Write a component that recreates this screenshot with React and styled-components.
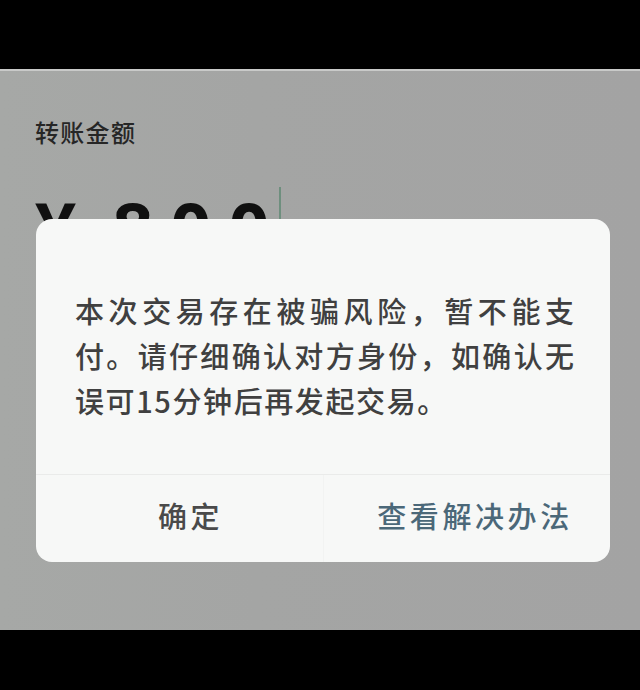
import React from "react";
import styled, { createGlobalStyle } from "styled-components";

const Global = createGlobalStyle`
  html, body { margin: 0; padding: 0; background: #000; }
  body { width: 640px; height: 690px; overflow: hidden; font-family: "Noto Sans CJK SC", "Noto Sans", sans-serif; }
`;

const Frame = styled.div`
  width: 640px;
  height: 690px;
  display: flex;
  flex-direction: column;
  background: #000;
`;

const Letterbox = styled.div`
  height: ${(p) => p.h}px;
  flex: none;
  background: #000;
`;

const Screen = styled.div`
  position: relative;
  height: 561px;
  flex: none;
  box-sizing: border-box;
  background: linear-gradient(90deg, #a6a8a6 0%, #a4a5a4 40%, #a3a3a3 100%);
  border-top: 2px solid #c9cac9;
  padding: 46px 0 0 35px;
  display: flex;
  flex-direction: column;
  overflow: hidden;
`;

const Label = styled.div`
  font-size: 24px;
  line-height: 29px;
  letter-spacing: 1.3px;
  font-weight: 500;
  color: #262626;
  font-family: "Noto Sans CJK SC", sans-serif;
`;

const AmountRow = styled.div`
  margin-top: 45px;
  display: flex;
  align-items: flex-start;
  font-family: "Noto Sans", "Noto Sans CJK SC", sans-serif;
  font-weight: 700;
  font-size: 72px;
  line-height: 72px;
  color: #101010;
`;

const Currency = styled.span`
  margin-right: 36px;
`;

const Digits = styled.span`
  letter-spacing: 17px;
`;

const Cursor = styled.span`
  width: 2px;
  height: 60px;
  margin-top: -4px;
  margin-left: -8px;
  background: #6e8f7e;
`;

const Dialog = styled.div`
  position: absolute;
  top: 148px;
  left: 36px;
  width: 574px;
  height: 343px;
  background: #f7f8f7;
  border-radius: 16px;
  display: flex;
  flex-direction: column;
  overflow: hidden;
`;

const Message = styled.div`
  box-sizing: border-box;
  padding: 69px 0 0 39px;
  height: 256px;
  font-size: 29px;
  line-height: 45px;
  font-weight: 500;
  color: #404040;
  font-family: "Noto Sans CJK SC", sans-serif;
  border-bottom: 1px solid #eaebea;
  display: flex;
  flex-direction: column;
  align-items: flex-start;
`;

const Line = styled.span`
  white-space: nowrap;
  width: ${(p) => (p.$justify ? "500px" : "auto")};
  letter-spacing: ${(p) => (p.$justify ? "1px" : "1.6px")};
  text-align: ${(p) => (p.$justify ? "justify" : "left")};
  text-align-last: ${(p) => (p.$justify ? "justify" : "left")};
  text-justify: inter-character;
`;

const Actions = styled.div`
  flex: 1;
  display: grid;
  grid-template-columns: 1fr 1fr;
`;

const Action = styled.button`
  border: none;
  background: transparent;
  padding: 0 0 8px ${(p) => p.$shift}px;
  font-family: "Noto Sans CJK SC", sans-serif;
  font-size: 29px;
  font-weight: 500;
  letter-spacing: 3.6px;
  color: ${(p) => p.$color};
  border-left: ${(p) => (p.$divider ? "1px solid #f2f3f2" : "none")};
  cursor: pointer;
`;

const lines = [
  { text: "本次交易存在被骗风险，暂不能支", justify: true },
  { text: "付。请仔细确认对方身份，如确认无", justify: true },
  { text: "误可15分钟后再发起交易。", justify: false },
];

export default function App() {
  return (
    <Frame>
      <Global />
      <Letterbox h={69} />
      <Screen>
        <Label>转账金额</Label>
        <AmountRow>
          <Currency>¥</Currency>
          <Digits>800</Digits>
          <Cursor />
        </AmountRow>
        <Dialog>
          <Message>
            {lines.map((l) => (
              <Line key={l.text} $justify={l.justify}>
                {l.text}
              </Line>
            ))}
          </Message>
          <Actions>
            <Action $color="#4a4a4a" $shift={22}>确定</Action>
            <Action $color="#4b6879" $shift={16} $divider>查看解决办法</Action>
          </Actions>
        </Dialog>
      </Screen>
      <Letterbox h={60} />
    </Frame>
  );
}
